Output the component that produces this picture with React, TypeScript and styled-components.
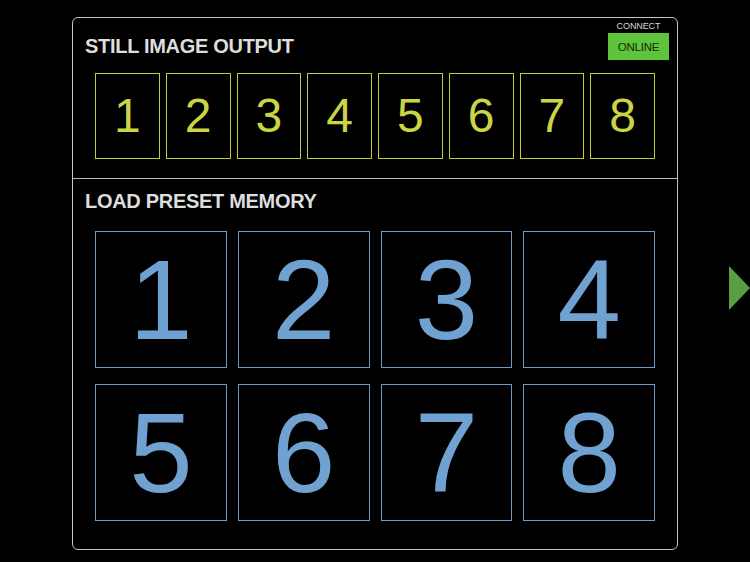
import React, { FunctionComponent } from 'react'
import styled, { createGlobalStyle } from 'styled-components'

const GlobalStyle = createGlobalStyle`
  html, body {
    margin: 0;
    padding: 0;
    background: #000;
  }
  body {
    font-family: 'Liberation Sans', Arial, sans-serif;
  }
`

const Screen = styled.div`
  display: flex;
  align-items: flex-start;
  width: 750px;
  height: 562px;
  box-sizing: border-box;
  padding: 17px 0 0 72px;
  background: #000;
  overflow: hidden;
`

const Panel = styled.div`
  display: flex;
  flex-direction: column;
  width: 606px;
  height: 533px;
  box-sizing: border-box;
  border: 1px solid #c4c4c4;
  border-radius: 6px;
`

const Section = styled.section<{ $height: number; $divider?: boolean }>`
  display: flex;
  flex-direction: column;
  height: ${(p) => p.$height}px;
  box-sizing: border-box;
  padding-top: ${(p) => (p.$divider ? 3 : 10)}px;
  border-bottom: ${(p) => (p.$divider ? '1px solid #b8b8b8' : 'none')};
`

const Header = styled.div`
  display: flex;
  justify-content: space-between;
  align-items: flex-start;
`

const Title = styled.h2<{ $offset?: number }>`
  margin: ${(p) => p.$offset ?? 0}px 0 0 12px;
  font-size: 20px;
  line-height: 24px;
  font-weight: 700;
  letter-spacing: -0.3px;
  color: #dedede;
`

const Connect = styled.div`
  display: flex;
  flex-direction: column;
  align-items: center;
  margin-right: 8px;
  gap: 2px;
`

const ConnectLabel = styled.span`
  font-size: 9px;
  line-height: 10px;
  letter-spacing: -0.1px;
  color: #d8d8d8;
`

const OnlineButton = styled.button`
  width: 61px;
  height: 27px;
  padding: 0;
  border: none;
  background: #5ec43b;
  color: #122a08;
  font-family: 'Liberation Sans', Arial, sans-serif;
  font-size: 11.5px;
  letter-spacing: -0.2px;
`

const Grid = styled.div<{ $cols: number; $gap: number; $rowGap: number; $top: number }>`
  display: grid;
  grid-template-columns: repeat(${(p) => p.$cols}, 1fr);
  column-gap: ${(p) => p.$gap}px;
  row-gap: ${(p) => p.$rowGap}px;
  margin: ${(p) => p.$top}px 22px 0 22px;
`

const Key = styled.button<{ $color: string; $border: string; $height: number; $size: number }>`
  display: flex;
  align-items: center;
  justify-content: center;
  height: ${(p) => p.$height}px;
  padding: 0;
  background: #000;
  border: 1.5px solid ${(p) => p.$border};
  color: ${(p) => p.$color};
  font-family: 'Liberation Sans', Arial, sans-serif;
  font-size: ${(p) => p.$size}px;
  font-weight: 400;
  line-height: 1;
`

const NextArrow = styled.svg`
  flex: none;
  margin: 249px 0 0 51px;
`

const stills = [1, 2, 3, 4, 5, 6, 7, 8]
const presets = [1, 2, 3, 4, 5, 6, 7, 8]

const App: FunctionComponent = () => (
  <>
    <GlobalStyle />
    <Screen>
      <Panel>
        <Section $height={161} $divider>
          <Header>
            <Title $offset={13}>STILL IMAGE OUTPUT</Title>
            <Connect>
              <ConnectLabel>CONNECT</ConnectLabel>
              <OnlineButton>ONLINE</OnlineButton>
            </Connect>
          </Header>
          <Grid $cols={8} $gap={6} $rowGap={0} $top={13}>
            {stills.map((n) => (
              <Key key={n} $color='#cad445' $border='#c3cb3c' $height={86} $size={48}>
                {n}
              </Key>
            ))}
          </Grid>
        </Section>
        <Section $height={370}>
          <Title>LOAD PRESET MEMORY</Title>
          <Grid $cols={4} $gap={11} $rowGap={16} $top={18}>
            {presets.map((n) => (
              <Key key={n} $color='#6fa2d0' $border='#6b9bc6' $height={137} $size={114}>
                {n}
              </Key>
            ))}
          </Grid>
        </Section>
      </Panel>
      <NextArrow width='21' height='44' viewBox='0 0 21 44'>
        <polygon points='0,0 21,22 0,44' fill='#5a9e44' />
      </NextArrow>
    </Screen>
  </>
)

export default App
